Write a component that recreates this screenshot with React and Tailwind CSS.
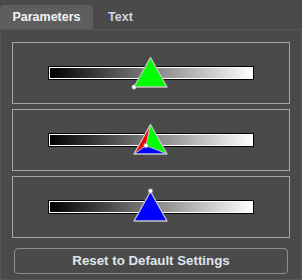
import React from "react";

function Tri({ variant }) {
  const A = [137.5, 14.5];
  const L = [121, 44];
  const R = [154, 44];
  const C = [133, 35.5];
  const p = (pts) => pts.map((q) => q.join(",")).join(" ");
  return (
    <svg
      className="absolute left-0 top-0 overflow-visible"
      width="276"
      height="60"
      viewBox="0 0 276 60"
    >
      {variant === "green" && (
        <>
          <polygon points={p([A, L, R])} fill="#00ff00" stroke="#c4c4c4" strokeWidth="1.3" strokeLinejoin="round" />
          <circle cx={L[0]} cy={L[1]} r="2.3" fill="#ffffff" stroke="#8a8a8a" strokeWidth="0.8" />
        </>
      )}
      {variant === "mix" && (
        <>
          <polygon points={p([A, L, C])} fill="#ff0000" />
          <polygon points={p([A, R, C])} fill="#00ff00" />
          <polygon points={p([L, R, C])} fill="#0000ff" />
          <polyline points={p([A, C])} fill="none" stroke="#c4c4c4" strokeWidth="1" />
          <polyline points={p([L, C, R])} fill="none" stroke="#c4c4c4" strokeWidth="1" />
          <polygon points={p([A, L, R])} fill="none" stroke="#c4c4c4" strokeWidth="1.3" strokeLinejoin="round" />
          <circle cx={C[0]} cy={C[1]} r="2.3" fill="#ffffff" stroke="#8a8a8a" strokeWidth="0.8" />
        </>
      )}
      {variant === "blue" && (
        <>
          <polygon points={p([A, L, R])} fill="#0000ff" stroke="#c4c4c4" strokeWidth="1.3" strokeLinejoin="round" />
          <circle cx={A[0]} cy={A[1] - 0.5} r="2.3" fill="#ffffff" stroke="#8a8a8a" strokeWidth="0.8" />
        </>
      )}
    </svg>
  );
}

function SliderBox({ variant }) {
  return (
    <div className="relative h-[62px] w-[278px] border border-[#a4a4a4]">
      <div className="ml-[35px] mt-[23px] h-[14px] w-[206px] border border-black">
        <div className="h-full w-full border border-white bg-[linear-gradient(to_right,#000000,#ffffff)]" />
      </div>
      <Tri variant={variant} />
    </div>
  );
}

export default function App() {
  return (
    <div
      className="h-[280px] w-[302px] bg-[#4a4a4a] font-bold"
      style={{ fontFamily: '"Liberation Sans", Arial, sans-serif' }}
    >
      <div className="flex h-[29px] items-end text-[12.5px]">
        <div className="flex h-[24px] w-[93px] items-center justify-center rounded-t-[4px] bg-[#5e5e5e] text-[#f2f4f8]">
          Parameters
        </div>
        <div className="flex h-[24px] w-[55px] items-center justify-center text-[#cdd5e0]">
          Text
        </div>
      </div>
      <div className="h-[251px] border border-[#575757] pl-[11px] pt-[12px]">
        <div className="flex flex-col gap-[5px]">
          <SliderBox variant="green" />
          <SliderBox variant="mix" />
          <SliderBox variant="blue" />
        </div>
        <div className="ml-[2px] mt-[10px] flex h-[26px] w-[274px] items-center justify-center rounded-[4px] border border-[#8e8e8e] text-[13.3px] text-[#dfe4ea]">
          Reset to Default Settings
        </div>
      </div>
    </div>
  );
}
